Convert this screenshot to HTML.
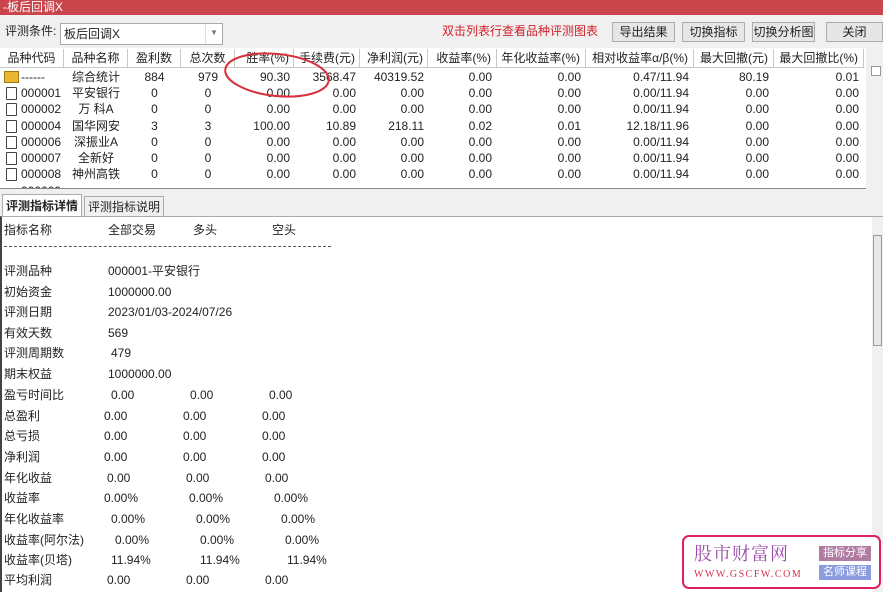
<!DOCTYPE html>
<html><head><meta charset="utf-8">
<style>
*{margin:0;padding:0;box-sizing:border-box}
body{width:883px;height:592px;overflow:hidden;background:#f0f0f0;font-family:"Liberation Sans","Noto Sans CJK SC",sans-serif;font-size:12px;color:#222;position:relative}
.a{position:absolute;white-space:nowrap;line-height:14px}
.btn{position:absolute;top:22px;height:20px;border:1px solid #adadad;background:#e6e6e6;text-align:center;line-height:18px;font-size:12px}
.hd{position:absolute;top:49px;height:19px;border-right:1px solid #c8c8c8;background:#fff;text-align:center;line-height:19px;font-size:12px}
.r{text-align:right}
.doc{position:absolute;width:11px;height:13px;border:1px solid #444;border-radius:1px;background:#fff}
</style></head><body>
<div class="a" style="left:0;top:0;width:883px;height:15px;background:#c9444b;color:#fff;line-height:15px;padding-left:3px;font-size:12px">-板后回调X</div>
<div class="a" style="left:5px;top:24px">评测条件:</div>
<div class="a" style="left:60px;top:23px;width:163px;height:22px;background:#fff;border:1px solid #aaa"></div>
<div class="a" style="left:64px;top:27px">板后回调X</div>
<div class="a" style="left:205px;top:24px;width:17px;height:20px;border-left:1px solid #ddd;font-size:8px;color:#777;text-align:center;line-height:18px">▼</div>
<div class="a" style="left:442px;top:24px;color:#d0202a">双击列表行查看品种评测图表</div>
<div class="btn" style="left:612px;width:63px">导出结果</div>
<div class="btn" style="left:682px;width:63px">切换指标</div>
<div class="btn" style="left:752px;width:63px">切换分析图</div>
<div class="btn" style="left:826px;width:57px">关闭</div>
<div class="a" style="left:0;top:48px;width:866px;height:141px;background:#fff;border-bottom:1px solid #888"></div>
<div class="hd" style="left:0;width:64px">品种代码</div>
<div class="hd" style="left:64px;width:64px">品种名称</div>
<div class="hd" style="left:128px;width:53px">盈利数</div>
<div class="hd" style="left:181px;width:54px">总次数</div>
<div class="hd r" style="left:235px;width:59px;padding-right:4px">胜率(%)</div>
<div class="hd r" style="left:294px;width:66px;padding-right:4px">手续费(元)</div>
<div class="hd r" style="left:360px;width:68px;padding-right:4px">净利润(元)</div>
<div class="hd r" style="left:428px;width:69px;padding-right:5px">收益率(%)</div>
<div class="hd r" style="left:497px;width:89px;padding-right:5px">年化收益率(%)</div>
<div class="hd r" style="left:586px;width:108px;padding-right:5px">相对收益率α/β(%)</div>
<div class="hd r" style="left:694px;width:80px;padding-right:5px">最大回撤(元)</div>
<div class="hd r" style="left:774px;width:90px;padding-right:5px">最大回撤比(%)</div>
<div class="a" style="left:0;top:67px;width:864px;height:1px;background:#c8c8c8"></div>
<div class="a" style="left:871px;top:66px;width:10px;height:10px;border:1px solid #999;background:#fff"></div>
<div id="rows"></div>
<svg class="a" style="left:220px;top:48px" width="120" height="56"><ellipse cx="57" cy="27" rx="52" ry="21" fill="none" stroke="#d8303a" stroke-width="2" transform="rotate(6 57 27)"/></svg>
<div class="a" style="left:2px;top:194px;width:80px;height:23px;border:1px solid #aaa;border-bottom:none;background:#fff;font-weight:bold;text-align:center;line-height:22px">评测指标详情</div>
<div class="a" style="left:84px;top:196px;width:80px;height:20px;border:1px solid #aaa;border-bottom:none;background:#f0f0f0;text-align:center;line-height:20px">评测指标说明</div>
<div class="a" style="left:0;top:216px;width:883px;height:376px;background:#fff;border-left:2px solid #444;border-top:1px solid #aaa"></div>
<div class="a" style="left:872px;top:217px;width:11px;height:375px;background:#f0f0f0"></div>
<div class="a" style="left:873px;top:235px;width:9px;height:111px;border:1px solid #999;background:#e8e8e8"></div>
<div id="det"></div>
<div class="a" style="left:682px;top:535px;width:199px;height:54px;border:2px solid #e0205a;border-radius:7px;background:#fff"></div>
<div class="a" style="left:694px;top:543px;font-size:18px;line-height:20px;color:#9a4aa8;font-family:'Noto Serif CJK SC',serif;letter-spacing:1px">股市财富网</div>
<div class="a" style="left:694px;top:568px;font-size:10px;color:#d8304a;font-family:'Liberation Serif',serif;letter-spacing:1.5px">WWW.GSCFW.COM</div>
<div class="a" style="left:819px;top:546px;width:52px;height:15px;background:#b07ca2;color:#fff;font-size:11px;text-align:center;line-height:15px">指标分享</div>
<div class="a" style="left:819px;top:565px;width:52px;height:15px;background:#8a9be0;color:#fff;font-size:11px;text-align:center;line-height:15px">名师课程</div>
<script>
var rows=[["------","综合统计","884","979","90.30","3568.47","40319.52","0.00","0.00","0.47/11.94","80.19","0.01"],
["000001","平安银行","0","0","0.00","0.00","0.00","0.00","0.00","0.00/11.94","0.00","0.00"],
["000002","万 科A","0","0","0.00","0.00","0.00","0.00","0.00","0.00/11.94","0.00","0.00"],
["000004","国华网安","3","3","100.00","10.89","218.11","0.02","0.01","12.18/11.96","0.00","0.00"],
["000006","深振业A","0","0","0.00","0.00","0.00","0.00","0.00","0.00/11.94","0.00","0.00"],
["000007","全新好","0","0","0.00","0.00","0.00","0.00","0.00","0.00/11.94","0.00","0.00"],
["000008","神州高铁","0","0","0.00","0.00","0.00","0.00","0.00","0.00/11.94","0.00","0.00"]];
var cols=[[128,155],[181,208],[235,290],[294,356],[360,424],[428,492],[497,581],[586,689],[694,769],[774,859]];
var h="";
rows.forEach(function(r,i){var y=70+i*16.2;
 if(i==0)h+='<div class="a" style="left:4px;top:'+(y+1)+'px;width:15px;height:12px;background:#e8b830;border:1px solid #a07810"></div>';
 else h+='<div class="doc" style="left:6px;top:'+(y+1)+'px"></div>';
 h+='<div class="a" style="left:21px;top:'+y+'px">'+r[0]+'</div>';
 h+='<div class="a" style="left:64px;width:64px;text-align:center;top:'+y+'px">'+r[1]+'</div>';
 h+='<div class="a" style="left:128px;width:53px;text-align:center;top:'+y+'px">'+r[2]+'</div>';
 h+='<div class="a" style="left:181px;width:54px;text-align:center;top:'+y+'px">'+r[3]+'</div>';
 for(var c=2;c<10;c++){var x=cols[c];h+='<div class="a r" style="left:'+x[0]+'px;width:'+(x[1]-x[0])+'px;top:'+y+'px">'+r[c+2]+'</div>';}
});
h+='<div class="a" style="left:0;top:184px;width:864px;height:4px;overflow:hidden"><div style="position:absolute;top:0;left:21px;line-height:14px">000009</div></div>';
document.getElementById("rows").innerHTML=h;
var d=[[223,"指标名称",[[108,"全部交易"],[193,"多头"],[272,"空头"]]],
[264,"评测品种",[[108,"000001-平安银行"]]],[285,"初始资金",[[108,"1000000.00"]]],[305,"评测日期",[[108,"2023/01/03-2024/07/26"]]],
[326,"有效天数",[[108,"569"]]],[346,"评测周期数",[[111,"479"]]],[367,"期末权益",[[108,"1000000.00"]]],
[388,"盈亏时间比",[[111,"0.00"],[190,"0.00"],[269,"0.00"]]],[409,"总盈利",[[104,"0.00"],[183,"0.00"],[262,"0.00"]]],
[429,"总亏损",[[104,"0.00"],[183,"0.00"],[262,"0.00"]]],[450,"净利润",[[104,"0.00"],[183,"0.00"],[262,"0.00"]]],
[471,"年化收益",[[107,"0.00"],[186,"0.00"],[265,"0.00"]]],[491,"收益率",[[104,"0.00%"],[189,"0.00%"],[274,"0.00%"]]],
[512,"年化收益率",[[111,"0.00%"],[196,"0.00%"],[281,"0.00%"]]],[533,"收益率(阿尔法)",[[115,"0.00%"],[200,"0.00%"],[285,"0.00%"]]],
[553,"收益率(贝塔)",[[111,"11.94%"],[200,"11.94%"],[287,"11.94%"]]],[573,"平均利润",[[107,"0.00"],[186,"0.00"],[265,"0.00"]]]];
var g="";d.forEach(function(l){g+='<div class="a" style="left:4px;top:'+l[0]+'px">'+l[1]+'</div>';l[2].forEach(function(v){g+='<div class="a" style="left:'+v[0]+'px;top:'+l[0]+'px">'+v[1]+'</div>';});});
g+='<div class="a" style="left:4px;top:246px;width:327px;border-top:1px dashed #555"></div>';
document.getElementById("det").innerHTML=g;
</script>
</body></html>
